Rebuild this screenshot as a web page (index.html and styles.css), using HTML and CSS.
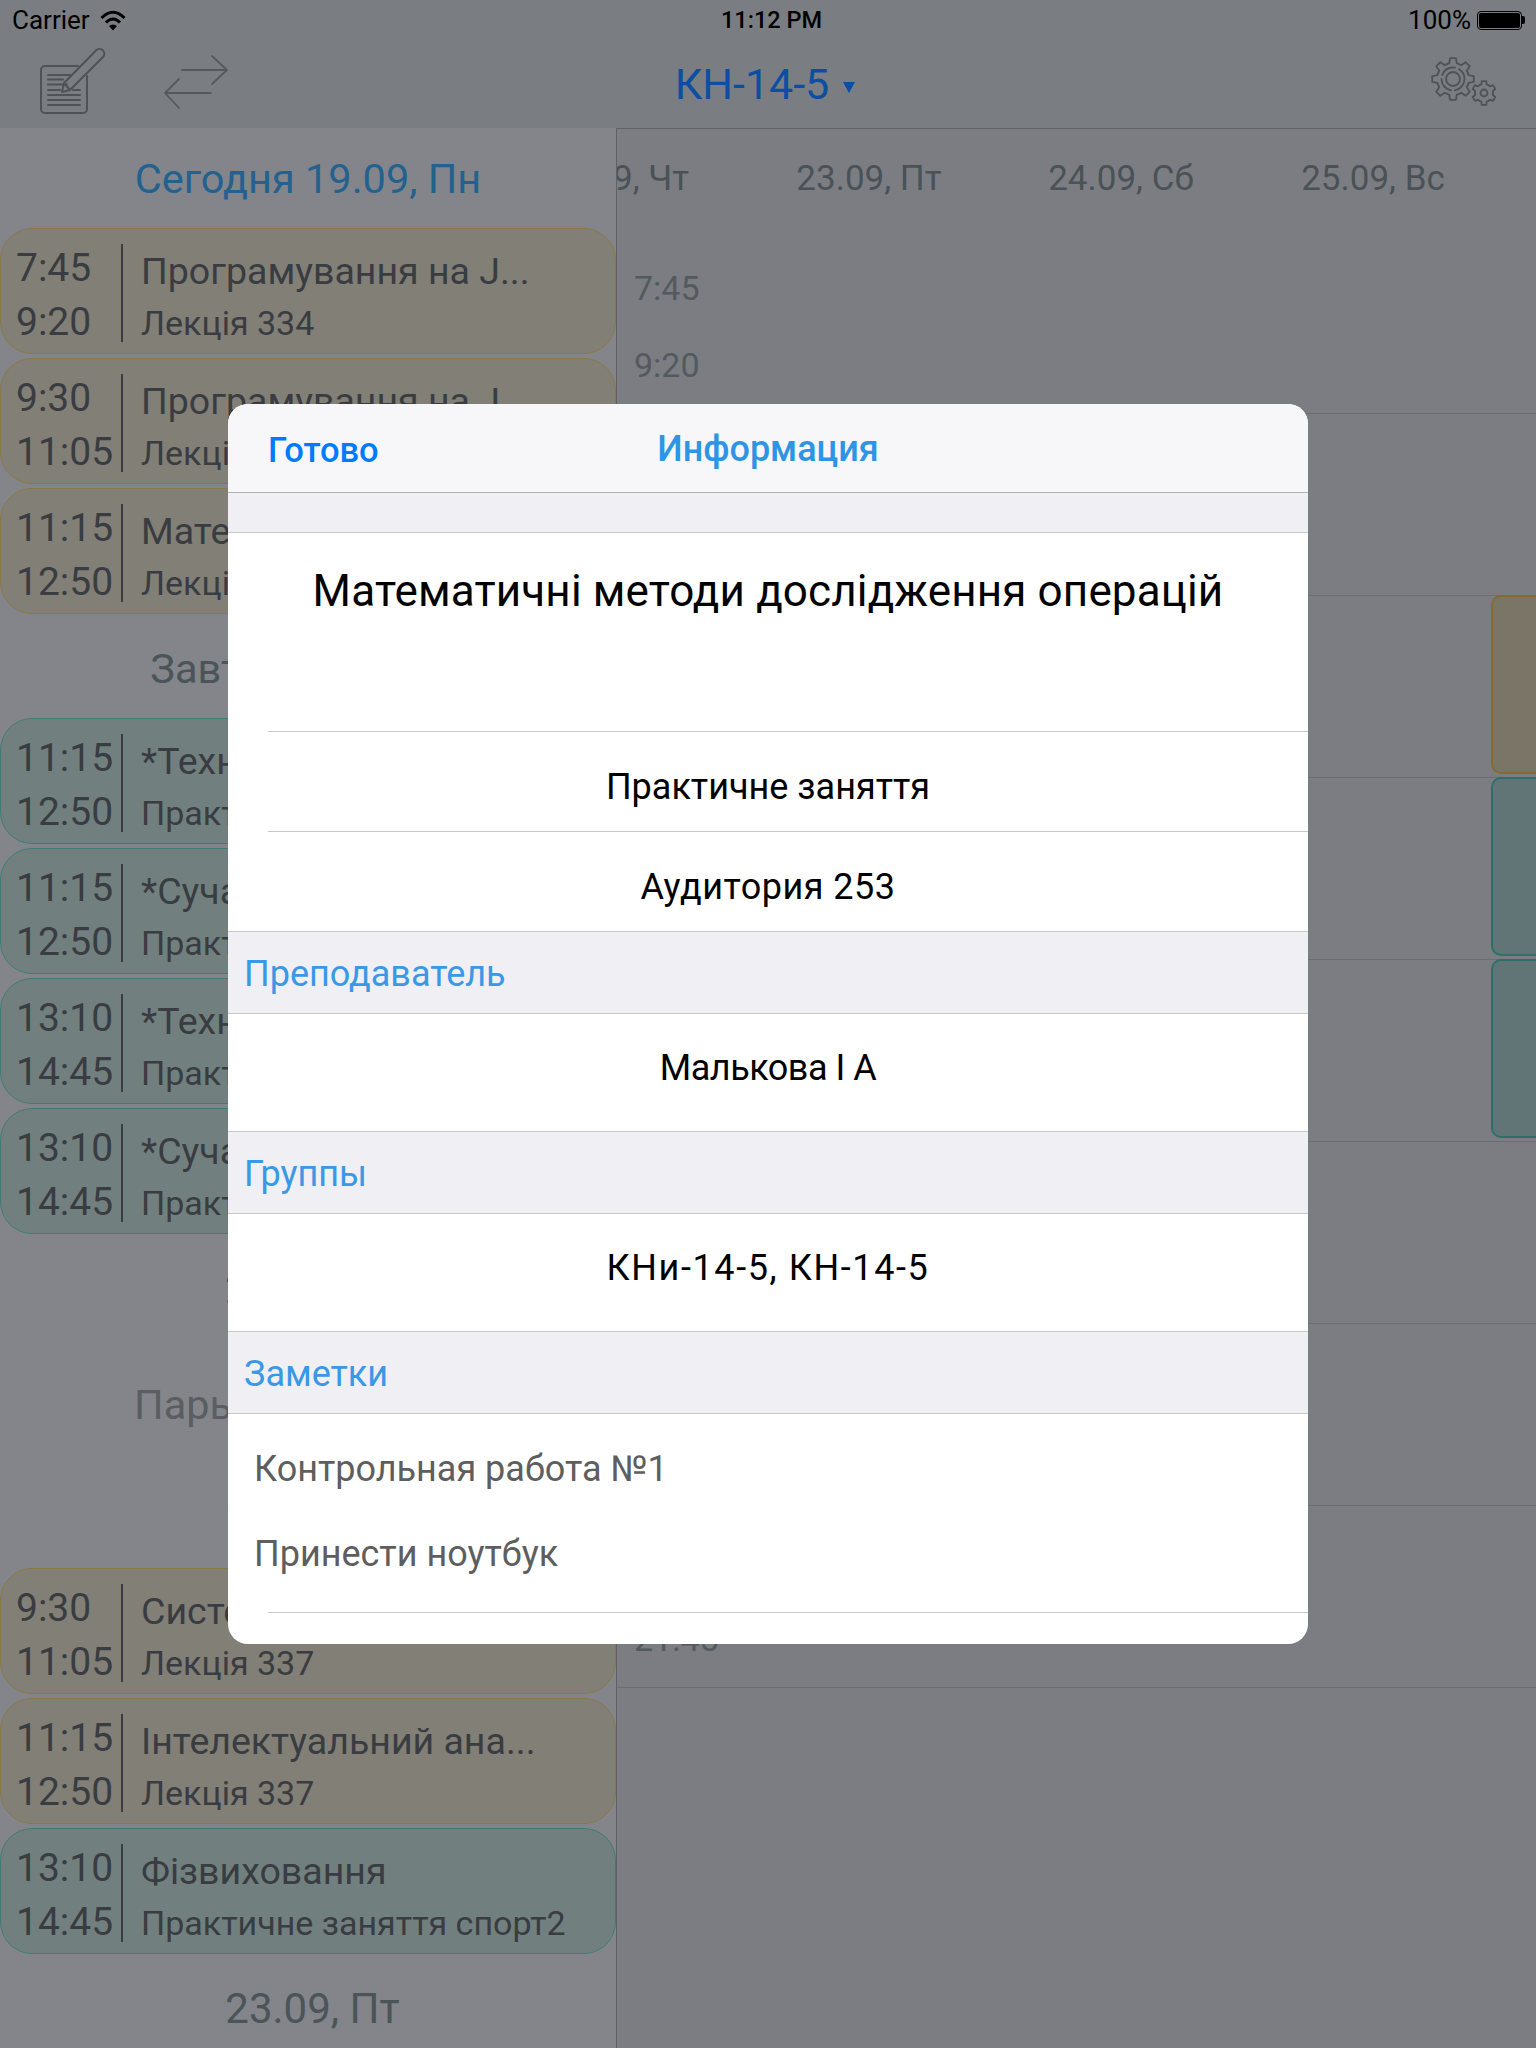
FILE: index.html
```html
<!DOCTYPE html>
<html lang="uk">
<head>
<meta charset="utf-8">
<title>Расписание</title>
<link rel="stylesheet" href="styles.css">
</head>
<body>
<div class="app">
  <header class="topbar">
    <div class="status">
      <div class="status-left">
        <span>Carrier</span>
        <svg class="wifi" viewBox="98 8 28 23" width="28" height="23"><path class="wifi-arc" d="M100.500 17Q112 5.500 123.500 17"/><path class="wifi-arc" d="M105 21.500Q112 14.500 119 21.500"/><path class="wifi-dot" d="M108 25Q112 22 116 25L112 29.500Z"/></svg>
      </div>
      <div class="status-time">11:12 PM</div>
      <div class="status-right">
        <span>100%</span>
        <div class="battery"><div class="battery-fill"></div></div>
        <div class="battery-tip"></div>
      </div>
    </div>
    <nav class="nav">
      <div class="nav-tools">
        <svg class="ic ic-edit" viewBox="36 48 70 70" width="70" height="70">
          <path d="M78 66H45a4 4 0 0 0-4 4V109a4 4 0 0 0 4 4H83a4 4 0 0 0 4-4V76"/>
          <path d="M48 75H70M48 79.500H63M48 84.500H67M48 90H60M73 90H80M48 95H80M48 100H80M48 105H80"/>
          <path d="M62 92L64 83L96 50.500A4.500 4.500 0 0 1 103 57L70 90ZM64 83L70 90"/>
        </svg>
        <svg class="ic ic-swap" viewBox="160 50 72 62" width="72" height="62">
          <path d="M182 70H227M212 56L227 70L212 84M211 93H165M179 79L165 93L179 108"/>
        </svg>
      </div>
      <div class="nav-title">КН-14-5<span class="nav-caret"></span></div>
      <svg class="ic ic-gear" viewBox="1428 54 72 56" width="72" height="56">
        <g transform="translate(1453 79)">
          <path d="M-6.120-14.780Q-5-15.200-3.870-15.520L-2.920-20.800H2.920L3.870-15.520Q5-15.200 6.120-14.780"/>
          <path transform="rotate(45)" d="M-6.120-14.780Q-5-15.200-3.870-15.520L-2.920-20.800H2.920L3.870-15.520Q5-15.200 6.120-14.780"/>
          <path transform="rotate(90)" d="M-6.120-14.780Q-5-15.200-3.870-15.520L-2.920-20.800H2.920L3.870-15.520Q5-15.200 6.120-14.780"/>
          <path transform="rotate(135)" d="M-6.120-14.780Q-5-15.200-3.870-15.520L-2.920-20.800H2.920L3.870-15.520Q5-15.200 6.120-14.780"/>
          <path transform="rotate(180)" d="M-6.120-14.780Q-5-15.200-3.870-15.520L-2.920-20.800H2.920L3.870-15.520Q5-15.200 6.120-14.780"/>
          <path transform="rotate(225)" d="M-6.120-14.780Q-5-15.200-3.870-15.520L-2.920-20.800H2.920L3.870-15.520Q5-15.200 6.120-14.780"/>
          <path transform="rotate(270)" d="M-6.120-14.780Q-5-15.200-3.870-15.520L-2.920-20.800H2.920L3.870-15.520Q5-15.200 6.120-14.780"/>
          <path transform="rotate(315)" d="M-6.120-14.780Q-5-15.200-3.870-15.520L-2.920-20.800H2.920L3.870-15.520Q5-15.200 6.120-14.780"/>
          <circle r="7"/>
          <circle class="gear-dash" r="11.500"/>
        </g>
        <g transform="translate(1484 93)">
          <path d="M-4.500-7.790Q-3.500-8.300-2.630-8.610L-2.290-11.780H2.290L2.630-8.610Q3.500-8.300 4.500-7.790"/>
          <path transform="rotate(60)" d="M-4.500-7.790Q-3.500-8.300-2.630-8.610L-2.290-11.780H2.290L2.630-8.610Q3.500-8.300 4.500-7.790"/>
          <path transform="rotate(120)" d="M-4.500-7.790Q-3.500-8.300-2.630-8.610L-2.290-11.780H2.290L2.630-8.610Q3.500-8.300 4.500-7.790"/>
          <path transform="rotate(180)" d="M-4.500-7.790Q-3.500-8.300-2.630-8.610L-2.290-11.780H2.290L2.630-8.610Q3.500-8.300 4.500-7.790"/>
          <path transform="rotate(240)" d="M-4.500-7.790Q-3.500-8.300-2.630-8.610L-2.290-11.780H2.290L2.630-8.610Q3.500-8.300 4.500-7.790"/>
          <path transform="rotate(300)" d="M-4.500-7.790Q-3.500-8.300-2.630-8.610L-2.290-11.780H2.290L2.630-8.610Q3.500-8.300 4.500-7.790"/>
          <circle r="3.500"/>
        </g>
      </svg>
    </nav>
  </header>

  <main class="main">
    <section class="list">
      <div class="day day-today">Сегодня 19.09, Пн</div>
      <article class="card tan"><div class="times"><span>7:45</span><span>9:20</span></div><div class="info"><div class="name">Програмування на J...</div><div class="sub">Лекція 334</div></div></article>
      <article class="card tan"><div class="times"><span>9:30</span><span>11:05</span></div><div class="info"><div class="name">Програмування на J...</div><div class="sub">Лекція 334</div></div></article>
      <article class="card tan"><div class="times"><span>11:15</span><span>12:50</span></div><div class="info"><div class="name">Математичні мето...</div><div class="sub">Лекція 253</div></div></article>
      <div class="day">Завтра 20.09, Вт</div>
      <article class="card teal"><div class="times"><span>11:15</span><span>12:50</span></div><div class="info"><div class="name">*Технології ...</div><div class="sub">Практичне заняття</div></div></article>
      <article class="card teal"><div class="times"><span>11:15</span><span>12:50</span></div><div class="info"><div class="name">*Сучасні ...</div><div class="sub">Практичне заняття</div></div></article>
      <article class="card teal"><div class="times"><span>13:10</span><span>14:45</span></div><div class="info"><div class="name">*Технології ...</div><div class="sub">Практичне заняття</div></div></article>
      <article class="card teal"><div class="times"><span>13:10</span><span>14:45</span></div><div class="info"><div class="name">*Сучасні ...</div><div class="sub">Практичне заняття</div></div></article>
      <div class="day day-plain">21.09, Ср</div>
      <div class="no-lessons">Пары отсутствуют</div>
      <div class="day day-plain">22.09, Чт</div>
      <article class="card tan"><div class="times"><span>9:30</span><span>11:05</span></div><div class="info"><div class="name">Системи ...</div><div class="sub">Лекція 337</div></div></article>
      <article class="card tan"><div class="times"><span>11:15</span><span>12:50</span></div><div class="info"><div class="name">Інтелектуальний ана...</div><div class="sub">Лекція 337</div></div></article>
      <article class="card teal"><div class="times"><span>13:10</span><span>14:45</span></div><div class="info"><div class="name">Фізвиховання</div><div class="sub">Практичне заняття спорт2</div></div></article>
      <div class="day day-plain">23.09, Пт</div>
    </section>

    <section class="week">
      <div class="week-days">
        <div class="week-day">22.09, Чт</div>
        <div class="week-day">23.09, Пт</div>
        <div class="week-day">24.09, Сб</div>
        <div class="week-day">25.09, Вс</div>
      </div>
      <div class="slot"><div class="slot-time"><span>7:45</span><span>9:20</span></div></div>
      <div class="slot"><div class="slot-time"><span>9:30</span><span>11:05</span></div></div>
      <div class="slot"><div class="slot-time"><span>11:15</span><span>12:50</span></div><div class="block block-tan"></div></div>
      <div class="slot"><div class="slot-time"><span>13:10</span><span>14:45</span></div><div class="block block-teal"></div></div>
      <div class="slot"><div class="slot-time"><span>15:00</span><span>16:35</span></div><div class="block block-teal"></div></div>
      <div class="slot"><div class="slot-time"><span>16:45</span><span>18:20</span></div></div>
      <div class="slot"><div class="slot-time"><span>18:30</span><span>20:05</span></div></div>
      <div class="slot"><div class="slot-time"><span>20:10</span><span>21:45</span></div></div>
    </section>
  </main>

  <aside class="modal">
    <div class="modal-head">
      <span class="modal-done">Готово</span>
      <span class="modal-title">Информация</span>
    </div>
    <div class="band"></div>
    <div class="cell cell-title inset">Математичні методи дослідження операцій</div>
    <div class="cell cell-low inset">Практичне заняття</div>
    <div class="cell cell-low cell-end">Аудитория 253</div>
    <div class="section">Преподаватель</div>
    <div class="cell cell-tall cell-name">Малькова І А</div>
    <div class="section">Группы</div>
    <div class="cell cell-tall cell-groups">КНи-14-5, КН-14-5</div>
    <div class="section">Заметки</div>
    <div class="notes inset">
      <p>Контрольная работа №1</p>
      <p>Принести ноутбук</p>
    </div>
  </aside>
</div>
</body>
</html>
```
FILE: styles.css
```css
* { box-sizing: border-box; }
html, body { margin: 0; padding: 0; }
body { font-family: Roboto, "Noto Sans", "Liberation Sans", sans-serif; background: #7c7d82; }

.app { position: relative; width: 1536px; height: 2048px; overflow: hidden; display: flex; flex-direction: column; background: #7c7d82; }

/* top bar */
.topbar { height: 129px; flex: none; background: #7a7d82; border-bottom: 1px solid #5f6166; }
.status { height: 40px; display: grid; grid-template-columns: 1fr auto 1fr; align-items: center; padding: 0 11px 0 12px; font-size: 26px; color: #000; }
.status-left { display: flex; align-items: center; gap: 9px; }
.wifi { display: block; }
.wifi-arc { fill: none; stroke: #000; stroke-width: 3; }
.wifi-dot { fill: #000; }
.status-time { font-size: 23.500px; font-weight: 500; padding-left: 6px; }
.status-right { display: flex; align-items: center; justify-content: flex-end; }
.status-right span { margin-right: 6px; }
.battery { width: 45px; height: 19px; border: 1px solid #000; border-radius: 4px; padding: 1px; }
.battery-fill { width: 100%; height: 100%; background: #000; border-radius: 2px; }
.battery-tip { width: 3px; height: 8px; background: #000; border-radius: 0 2px 2px 0; }

.nav { height: 88px; display: grid; grid-template-columns: 1fr auto 1fr; align-items: start; padding: 0 36px; }
.nav-tools { display: flex; gap: 54px; padding-top: 8px; }
.ic { display: block; fill: none; stroke: #4f5256; stroke-width: 2; stroke-linejoin: round; stroke-linecap: round; }
.ic-swap { margin-top: 2px; stroke-width: 1.800; stroke: #55585c; }
.ic-gear { justify-self: end; margin-top: 14px; stroke-width: 1.800; }
.gear-dash { stroke-dasharray: 16 4; }
.nav-title { font-size: 43px; line-height: 48px; padding: 20px 6px 0 0; height: 68px; color: #0b4ea2; display: flex; align-items: center; }
.nav-caret { width: 0; height: 0; margin: 6px 0 0 14px; border-left: 6px solid transparent; border-right: 6px solid transparent; border-top: 11px solid #0b4ea2; }

/* main columns */
.main { flex: 1; display: flex; min-height: 0; }
.list { width: 617px; flex: none; margin-top: -1px; background: #83858a; border-right: 1px solid #5f6166; }
.day { height: 100px; display: flex; align-items: center; justify-content: center; font-size: 41.500px; color: #4a5459; }
.day-today { color: #25618f; }
.day-plain { font-size: 42px; padding-left: 9px; }
.no-lessons { height: 130px; display: flex; align-items: center; justify-content: center; font-size: 41.500px; color: #5a5d61; padding: 2px 0 0 10px; }

.card { height: 126px; width: 616px; margin-bottom: 4px; border: 1px solid; border-radius: 32px; display: flex; color: #393c41; }
.card.tan { background: #827f76; border-color: #8a7845; }
.card.teal { background: #71807f; border-color: #3f7c76; }
.times { width: 122px; flex: none; margin-top: 15px; height: 98px; display: flex; flex-direction: column; gap: 8px; padding: 1px 0 0 15px; font-size: 39px; line-height: 46px; border-right: 2px solid #393c41; white-space: nowrap; }
.info { padding: 18px 0 0 18px; white-space: nowrap; }
.name { font-size: 37.500px; line-height: 48px; }
.sub { font-size: 34px; line-height: 40px; margin-top: 8px; }

/* week */
.week { flex: 1; min-width: 0; overflow: hidden; background: #7c7d82; }
.week-days { height: 103px; margin-left: -126px; display: flex; }
.week-day { width: 252px; flex: none; display: flex; align-items: center; justify-content: center; font-size: 35px; color: #4a5257; padding-bottom: 4px; }
.slot { height: 182px; border-bottom: 1px solid #6c6d72; display: flex; justify-content: space-between; }
.slot-time { padding: 37px 0 0 17px; display: flex; flex-direction: column; gap: 39px; font-size: 34px; line-height: 38px; color: #535a5f; }
.block { width: 70px; height: 179px; margin-right: -25px; margin-top: -1px; border: 2px solid; border-radius: 10px; }
.block-tan { background: #7b7568; border-color: #866a2e; }
.block-teal { background: #617577; border-color: #2d7069; }

/* modal */
.modal { position: absolute; left: 228px; top: 404px; width: 1080px; height: 1240px; background: #fff; border-radius: 20px; overflow: hidden; font-size: 36px; line-height: 42px; color: #000; }
.modal-head { height: 89px; background: #f7f7f9; border-bottom: 1px solid #b0b0b3; display: flex; align-items: center; justify-content: center; position: relative; padding-top: 1px; }
.modal-done { position: absolute; left: 40px; top: 25px; font-size: 34.500px; font-weight: 500; color: #007aff; }
.modal-title { font-weight: 500; color: #2e95e6; }
.band { height: 40px; background: #efeff4; border-bottom: 1px solid #c8c7cc; }
.cell { position: relative; display: flex; justify-content: center; text-align: center; }
.inset::after { content: ""; position: absolute; left: 40px; right: 0; bottom: 0; height: 1px; background: #c8c7cc; }
.cell-title { height: 199px; font-size: 44px; line-height: 52px; padding-top: 32px; letter-spacing: 0.140px; }
.cell-low { height: 100px; padding-top: 34px; }
.cell-end { height: 99px; letter-spacing: 0.500px; }
.cell-tall { height: 117px; padding-top: 33px; }
.cell-name { letter-spacing: -0.500px; }
.cell-groups { letter-spacing: 1.600px; }
.section { height: 83px; display: flex; align-items: center; padding: 2px 0 0 16px; background: #efeff4; color: #3a98e6; border-top: 1px solid #c8c7cc; border-bottom: 1px solid #c8c7cc; }
.notes { position: relative; height: 199px; padding: 34px 0 0 26px; color: #5e5e5e; }
.notes p { margin: 0 0 43px; line-height: 42px; }
```
